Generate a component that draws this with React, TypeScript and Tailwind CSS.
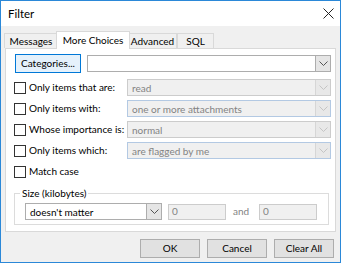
import React from "react";

const Chevron: React.FC<{ disabled?: boolean }> = ({ disabled }) => (
  <svg width="9" height="5" viewBox="0 0 9 5" fill="none">
    <path
      d="M0.5 0.5 L4.5 4.5 L8.5 0.5"
      stroke={disabled ? "#c4c4c4" : "#555"}
      strokeWidth="1"
    />
  </svg>
);

const Checkbox: React.FC = () => (
  <div className="w-[12px] h-[12px] border border-[#333] bg-white shrink-0" />
);

type ComboProps = { value?: string; disabled?: boolean; blue?: boolean; className?: string };

const Combo: React.FC<ComboProps> = ({ value = "", disabled, blue, className = "" }) => (
  <div
    className={
      "flex items-center h-[17px] border " +
      (disabled
        ? blue
          ? "border-[#b3c9e3] bg-[#f0f0f0] "
          : "border-[#cccccc] bg-[#f0f0f0] "
        : "border-[#adadad] bg-white ") +
      className
    }
  >
    <span
      className={
        "flex-1 pl-[4px] leading-none whitespace-nowrap " +
        (disabled ? "text-[#838383]" : "text-black")
      }
    >
      {value}
    </span>
    <div
      className={
        "w-[15px] h-[15px] flex items-center justify-center border-l " +
        (disabled ? "border-[#d6d6d6] bg-[#e8e8e8]" : "border-[#adadad] bg-[#e5e5e5]")
      }
    >
      <Chevron disabled={disabled} />
    </div>
  </div>
);

const CheckRow: React.FC<{ label: string; value: string; blue?: boolean }> = ({
  label,
  value,
  blue,
}) => (
  <div className="flex items-center h-[17px] mt-[4px] pl-[8px] pr-[4px]">
    <Checkbox />
    <span className="w-[101px] pl-[3px] shrink-0 whitespace-nowrap">{label}</span>
    <Combo value={value} disabled blue={blue} className="flex-1" />
  </div>
);

const Tab: React.FC<{ label: string; active?: boolean; className?: string }> = ({
  label,
  active,
  className = "",
}) => (
  <div
    className={
      "border border-b-0 border-[#d9d9d9] flex items-center justify-center whitespace-nowrap " +
      (active
        ? "bg-white h-[18px] -mb-px relative z-10 -mx-[2px] "
        : "bg-[#f0f0f0] h-[15px] ") +
      className
    }
  >
    {label}
  </div>
);

const Btn: React.FC<{ label: string; focus?: boolean; className?: string }> = ({
  label,
  focus,
  className = "",
}) => (
  <div
    className={
      "h-[19px] flex items-center justify-center border whitespace-nowrap " +
      (focus ? "border-[#0078d7] bg-[#e5f1fb] " : "border-[#adadad] bg-[#e1e1e1] ") +
      className
    }
  >
    {label}
  </div>
);

export default function App() {
  return (
    <div
      className="w-[341px] h-[263px] border border-[#2b88d8] bg-[#f0f0f0] flex flex-col text-[10px] text-black"
      style={{ fontFamily: 'Lato, "Noto Sans", sans-serif' }}
    >
      <div className="h-[25px] bg-white flex items-center justify-between pl-[7px] pr-[6px] shrink-0">
        <span className="text-[11.5px]">Filter</span>
        <svg width="11" height="11" viewBox="0 0 11 11">
          <path d="M0.5 0.5 L10.5 10.5 M10.5 0.5 L0.5 10.5" stroke="#222" strokeWidth="1" />
        </svg>
      </div>

      <div className="flex items-end pl-[3px] mt-[5px] h-[17px]">
        <Tab label="Messages" className="w-[54px]" />
        <Tab label="More Choices" active className="w-[74px]" />
        <Tab label="Advanced" className="w-[49px]" />
        <Tab label="SQL" className="w-[37px]" />
      </div>

      <div className="mx-[4px] h-[184px] bg-white border border-[#d9d9d9] flex flex-col">
        <div className="flex items-center mt-[5px] pl-[9px] pr-[4px]">
          <Btn label="Categories..." focus className="w-[66px] h-[18px]" />
          <Combo className="flex-1 ml-[6px]" />
        </div>
        <div className="h-[2px]" />
        <CheckRow label="Only items that are:" value="read" />
        <CheckRow label="Only items with:" value="one or more attachments" blue />
        <CheckRow label="Whose importance is:" value="normal" />
        <CheckRow label="Only items which:" value="are flagged by me" blue />
        <div className="flex items-center h-[17px] mt-[4px] pl-[8px]">
          <Checkbox />
          <span className="pl-[3px]">Match case</span>
        </div>

        <div className="relative mt-[13px] ml-[8px] mr-[6px] h-[32px] border border-[#dcdcdc]">
          <span className="absolute -top-[8px] left-[5px] bg-white px-[2px] leading-[14px]">
            Size (kilobytes)
          </span>
          <div className="flex items-center mt-[9px] pl-[10px]">
            <Combo value="doesn't matter" className="w-[137px]" />
            <div className="ml-[6px] w-[58px] h-[16px] border border-[#cccccc] bg-[#f0f0f0] flex items-center pl-[3px] text-[#838383]">
              0
            </div>
            <span className="ml-[7px] w-[26px] text-[#838383]">and</span>
            <div className="w-[58px] h-[16px] border border-[#cccccc] bg-[#f0f0f0] flex items-center pl-[3px] text-[#838383]">
              0
            </div>
          </div>
        </div>
      </div>

      <div className="flex justify-end gap-[7px] pr-[6px] mt-[7px]">
        <Btn label="OK" className="w-[60px]" />
        <Btn label="Cancel" className="w-[60px]" />
        <Btn label="Clear All" className="w-[60px]" />
      </div>
    </div>
  );
}
